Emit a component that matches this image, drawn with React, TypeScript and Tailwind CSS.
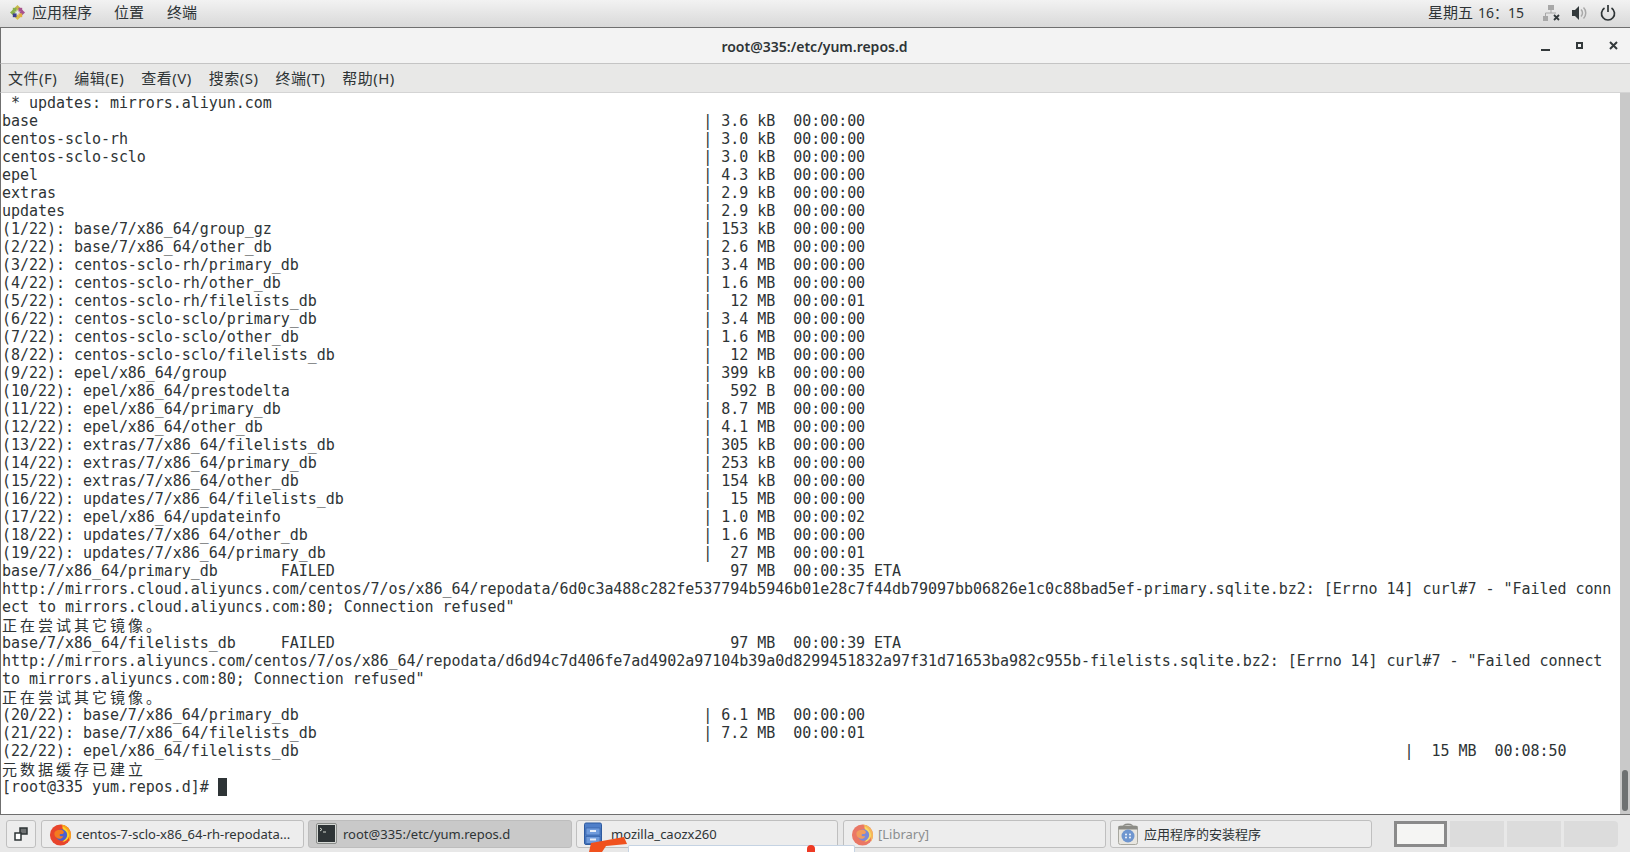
const mono = "font-['DejaVu_Sans_Mono','Liberation_Mono',monospace]"

function row(name: string, size: string, time: string) {
  return `${name.padEnd(78)}| ${size.padStart(6)}  ${time}`
}

const lines: { text: string; cjk?: boolean }[] = [
  { text: ' * updates: mirrors.aliyun.com' },
  { text: row('base', '3.6 kB', '00:00:00') },
  { text: row('centos-sclo-rh', '3.0 kB', '00:00:00') },
  { text: row('centos-sclo-sclo', '3.0 kB', '00:00:00') },
  { text: row('epel', '4.3 kB', '00:00:00') },
  { text: row('extras', '2.9 kB', '00:00:00') },
  { text: row('updates', '2.9 kB', '00:00:00') },
  { text: row('(1/22): base/7/x86_64/group_gz', '153 kB', '00:00:00') },
  { text: row('(2/22): base/7/x86_64/other_db', '2.6 MB', '00:00:00') },
  { text: row('(3/22): centos-sclo-rh/primary_db', '3.4 MB', '00:00:00') },
  { text: row('(4/22): centos-sclo-rh/other_db', '1.6 MB', '00:00:00') },
  { text: row('(5/22): centos-sclo-rh/filelists_db', '12 MB', '00:00:01') },
  { text: row('(6/22): centos-sclo-sclo/primary_db', '3.4 MB', '00:00:00') },
  { text: row('(7/22): centos-sclo-sclo/other_db', '1.6 MB', '00:00:00') },
  { text: row('(8/22): centos-sclo-sclo/filelists_db', '12 MB', '00:00:00') },
  { text: row('(9/22): epel/x86_64/group', '399 kB', '00:00:00') },
  { text: row('(10/22): epel/x86_64/prestodelta', '592 B', '00:00:00') },
  { text: row('(11/22): epel/x86_64/primary_db', '8.7 MB', '00:00:00') },
  { text: row('(12/22): epel/x86_64/other_db', '4.1 MB', '00:00:00') },
  { text: row('(13/22): extras/7/x86_64/filelists_db', '305 kB', '00:00:00') },
  { text: row('(14/22): extras/7/x86_64/primary_db', '253 kB', '00:00:00') },
  { text: row('(15/22): extras/7/x86_64/other_db', '154 kB', '00:00:00') },
  { text: row('(16/22): updates/7/x86_64/filelists_db', '15 MB', '00:00:00') },
  { text: row('(17/22): epel/x86_64/updateinfo', '1.0 MB', '00:00:02') },
  { text: row('(18/22): updates/7/x86_64/other_db', '1.6 MB', '00:00:00') },
  { text: row('(19/22): updates/7/x86_64/primary_db', '27 MB', '00:00:01') },
  { text: 'base/7/x86_64/primary_db       FAILED'.padEnd(81) + '97 MB  00:00:35 ETA' },
  { text: 'http://mirrors.cloud.aliyuncs.com/centos/7/os/x86_64/repodata/6d0c3a488c282fe537794b5946b01e28c7f44db79097bb06826e1c0c88bad5ef-primary.sqlite.bz2: [Errno 14] curl#7 - "Failed conn' },
  { text: 'ect to mirrors.cloud.aliyuncs.com:80; Connection refused"' },
  { text: '正在尝试其它镜像。', cjk: true },
  { text: 'base/7/x86_64/filelists_db     FAILED'.padEnd(81) + '97 MB  00:00:39 ETA' },
  { text: 'http://mirrors.aliyuncs.com/centos/7/os/x86_64/repodata/d6d94c7d406fe7ad4902a97104b39a0d8299451832a97f31d71653ba982c955b-filelists.sqlite.bz2: [Errno 14] curl#7 - "Failed connect' },
  { text: 'to mirrors.aliyuncs.com:80; Connection refused"' },
  { text: '正在尝试其它镜像。', cjk: true },
  { text: row('(20/22): base/7/x86_64/primary_db', '6.1 MB', '00:00:00') },
  { text: row('(21/22): base/7/x86_64/filelists_db', '7.2 MB', '00:00:01') },
  { text: '(22/22): epel/x86_64/filelists_db'.padEnd(156) + '|  15 MB  00:08:50' },
  { text: '元数据缓存已建立', cjk: true },
]

function CentosLogo() {
  return (
    <svg width="15" height="15" viewBox="0 0 16 16">
      <path d="M8 0 11 3 8 6 5 3Z" fill="#c9b84a" />
      <path d="M8 16 5 13 8 10 11 13Z" fill="#d9c24a" />
      <path d="M0 8 3 5 6 8 3 11Z" fill="#8ab04a" />
      <path d="M16 8 13 11 10 8 13 5Z" fill="#a8528f" />
      <rect x="3" y="3" width="4" height="4" fill="#8ab04a" />
      <rect x="9" y="3" width="4" height="4" fill="#a8528f" />
      <rect x="3" y="9" width="4" height="4" fill="#3f3f8f" />
      <rect x="9" y="9" width="4" height="4" fill="#e0b040" />
    </svg>
  )
}

function FirefoxIcon({ faded }: { faded?: boolean }) {
  return (
    <svg width="23" height="24" viewBox="0 0 24 24" className={faded ? 'opacity-70' : ''}>
      <circle cx="12" cy="13" r="11" fill="#e8452c" />
      <path d="M12 2c6 0 11 5 11 11 0 3-1 5-2 7 0-6-2-11-7-14 1-2 0-3-2-4Z" fill="#f9a11b" />
      <path d="M14 4c4 2 7 6 7 10-1 4-4 6-7 6 3-2 4-5 3-8-1-3-3-5-3-8Z" fill="#fcd12a" />
      <circle cx="13" cy="13" r="6" fill="#4a5fd0" />
      <path d="M6 10c2-2 5-3 8-2 2 1 2 3 0 4-1 0-3 0-3 1s2 2 4 1c-1 3-5 4-7 2-2-1-3-4-2-6Z" fill="#f47b20" />
    </svg>
  )
}

function TerminalIcon() {
  return (
    <svg width="21" height="21" viewBox="0 0 21 21">
      <rect x="0.5" y="0.5" width="20" height="20" rx="1.5" fill="#d5d8d5" stroke="#8a8d8a" />
      <rect x="2" y="2" width="17" height="17" fill="#2e3436" />
      <path d="M4 5 6 6.5 4 8M7 9H10" stroke="#d3d7cf" strokeWidth="1" fill="none" />
    </svg>
  )
}

function CabinetIcon() {
  return (
    <svg width="18" height="23" viewBox="0 0 18 23">
      <rect x="0.5" y="1" width="17" height="21.5" rx="1.5" fill="#4f7fc9" stroke="#2d5aa0" />
      <rect x="2" y="6" width="14" height="7" fill="#6f9bdc" stroke="#2d5aa0" strokeWidth="0.6" />
      <rect x="2" y="14.5" width="14" height="7" fill="#6f9bdc" stroke="#2d5aa0" strokeWidth="0.6" />
      <rect x="6" y="8" width="6" height="2" fill="#e8eef8" />
      <rect x="6" y="16.5" width="6" height="2" fill="#e8eef8" />
    </svg>
  )
}

function InstallerIcon() {
  return (
    <svg width="20" height="23" viewBox="0 0 20 23">
      <path d="M5 6C5 1 15 1 15 6" stroke="#8a8a85" strokeWidth="1.5" fill="none" />
      <rect x="0.5" y="4" width="19" height="18.5" rx="2" fill="#e8e6e0" stroke="#a8a8a0" />
      <rect x="0.5" y="4" width="19" height="3.5" fill="#8c8c86" />
      <circle cx="10" cy="14" r="6.5" fill="#6f96cf" />
      <circle cx="8" cy="12.5" r="0.9" fill="#fff" />
      <circle cx="12" cy="12.5" r="0.9" fill="#fff" />
      <circle cx="8" cy="15.5" r="0.9" fill="#fff" />
      <circle cx="12" cy="15.5" r="0.9" fill="#fff" />
    </svg>
  )
}

function TaskItem({ icon, label, active, dim, className, gap }: { icon: React.ReactNode; label: string; active?: boolean; dim?: boolean; className: string; gap: string }) {
  return (
    <div
      className={`flex h-[28px] shrink-0 items-center overflow-hidden rounded-[3px] border px-[7px] text-[13px] whitespace-nowrap ${gap} ${className} ${
        active ? 'border-[#bdbdbd] bg-[#c9c9c9] text-[#2e3436]' : 'border-[#bfbfbf] bg-[#ededed]'
      } ${dim ? 'text-[#8b8e8f]' : 'text-[#2e3436]'}`}
    >
      {icon}
      <span className="pt-[3px]">{label}</span>
    </div>
  )
}

export default function App() {
  const ui = "font-['Noto_Sans','Noto_Sans_CJK_SC',sans-serif]"
  return (
    <div className={`relative flex h-[852px] w-[1630px] flex-col overflow-hidden bg-white text-[#2e3436] ${ui}`}>
      {/* gnome top bar */}
      <div className="flex h-[28px] shrink-0 items-center border-b border-[#6f6f6f] bg-gradient-to-b from-[#f2f2f2] to-[#d9d9d9] pb-[2px] pl-[10px] pr-[14px] text-[15px]">
        <CentosLogo />
        <span className="ml-[7px]">应用程序</span>
        <span className="ml-[22px]">位置</span>
        <span className="ml-[23px]">终端</span>
        <span className="ml-auto text-[15px]">星期五</span>
        <span className="ml-[5px] text-[14px]">16：15</span>
        <svg className="ml-[19px]" width="17" height="16" viewBox="0 0 17 16">
          <path d="M5 0h6v5H5ZM0 11h5v5H0Z" fill="#a8a8a8" />
          <path d="M8 5v3H2.500v3M8 8h5" stroke="#a8a8a8" fill="none" />
          <path d="M11 10l5 5m0-5-5 5" stroke="#33393b" strokeWidth="1.800" />
        </svg>
        <svg className="ml-[12px]" width="16" height="16" viewBox="0 0 16 16">
          <path d="M0 5h3l4-4v14l-4-4H0Z" fill="#33393b" />
          <path d="M9 4.500c2 2 2 5 0 7M11.500 2.500c3 3 3 8 0 11" stroke="#a8a8a8" strokeWidth="1.500" fill="none" />
        </svg>
        <svg className="ml-[12px]" width="16" height="16" viewBox="0 0 16 16">
          <path d="M4.500 3a6.500 6.500 0 1 0 7 0M8 0v7" stroke="#2e3436" strokeWidth="1.700" fill="none" />
        </svg>
      </div>

      {/* window title */}
      <div className="flex h-[36px] shrink-0 items-center border-l border-[#6f6f6f] border-b border-b-[#c4c4c4] bg-[#f3f3f3] pr-[12px]">
        <div className="flex-1 pl-[87px] pt-px text-center text-[14px] font-semibold">root@335:/etc/yum.repos.d</div>
        <svg className="mt-[7px]" width="9" height="3" viewBox="0 0 9 3">
          <rect width="9" height="2" y="1" fill="#33393b" />
        </svg>
        <svg className="ml-[26px]" width="7" height="7" viewBox="0 0 7 7">
          <path d="M1 1h5v5H1Z" fill="none" stroke="#33393b" strokeWidth="2" />
        </svg>
        <svg className="ml-[26px]" width="9" height="9" viewBox="0 0 9 9">
          <path d="M1 1l7 7m0-7-7 7" stroke="#33393b" strokeWidth="2" />
        </svg>
      </div>

      {/* menu */}
      <div className="flex h-[29px] shrink-0 items-center gap-[17px] border-l border-[#6f6f6f] border-b border-b-[#d4d4d4] bg-[#e8e8e7] pl-[7px] text-[15px] tracking-[0.5px]">
        <span>文件(F)</span>
        <span>编辑(E)</span>
        <span>查看(V)</span>
        <span>搜索(S)</span>
        <span>终端(T)</span>
        <span>帮助(H)</span>
      </div>

      {/* terminal */}
      <div className="flex min-h-0 flex-1 border-l border-[#6f6f6f]">
        <div className={`min-w-0 flex-1 overflow-hidden pl-px pt-px text-[15px] leading-[18px] tracking-[-0.04px] whitespace-pre text-[#2e3436] ${mono}`}>
          {lines.map((l, i) =>
            l.cjk ? (
              <div key={i} className="h-[18px] font-['Noto_Sans_CJK_SC',sans-serif] tracking-[3px]">{l.text}</div>
            ) : (
              <div key={i} className="h-[18px]">{l.text}</div>
            ),
          )}
          <div className="flex h-[18px] items-center">
            <span>[root@335 yum.repos.d]# </span>
            <span className="h-[18px] w-[9px] bg-[#2e3436]" />
          </div>
        </div>
        <div className="flex w-[10px] shrink-0 flex-col justify-end bg-[#c9c9c9] px-[2px] pb-[3px]">
          <div className="h-[41px] rounded-full bg-[#6e7172]" />
        </div>
      </div>

      {/* window list */}
      <div className="relative flex h-[38px] shrink-0 items-center border-t border-[#6f6f6f] bg-[#e8e8e8] pl-[6px]">
        <div className="mr-[5px] flex h-[28px] w-[30px] shrink-0 items-center justify-center rounded-[3px] border border-[#bfbfbf] bg-[#ededed]">
          <svg width="14" height="14" viewBox="0 0 14 14">
            <path d="M6 1h7v6H6Z" fill="#6f7273" stroke="#2e3436" strokeWidth="1.500" />
            <path d="M1 6h6v7H1Z" fill="#fff" stroke="#2e3436" strokeWidth="1.500" />
          </svg>
        </div>
        <TaskItem className="w-[263px]" gap="gap-[4px]" icon={<FirefoxIcon />} label="centos-7-sclo-x86_64-rh-repodata..." />
        <TaskItem className="ml-[4px] w-[264px]" gap="gap-[6px]" active icon={<TerminalIcon />} label="root@335:/etc/yum.repos.d" />
        <TaskItem className="ml-[4px] w-[262px]" gap="gap-[9px]" icon={<CabinetIcon />} label="mozilla_caozx260" />
        <TaskItem className="ml-[5px] w-[263px]" gap="gap-[4px]" dim icon={<FirefoxIcon faded />} label="[Library]" />
        <TaskItem className="ml-[4px] w-[262px]" gap="gap-[6px]" icon={<InstallerIcon />} label="应用程序的安装程序" />
        <div className="ml-[22px] flex gap-[3px]">
          <div className="h-[26px] w-[53px] border-[3px] border-[#8a8a8a] bg-[#f5f5f3]" />
          <div className="h-[26px] w-[54px] bg-[#dcdcdc]" />
          <div className="h-[26px] w-[54px] bg-[#dcdcdc]" />
          <div className="h-[26px] w-[54px] rounded-r-[4px] bg-[#dcdcdc]" />
        </div>
      </div>

      {/* annotation poking in from below */}
      <div className="absolute bottom-0 left-[628px] h-[7px] w-[227px] rounded-t-[2px] border border-b-0 border-[#c5d3e3] bg-white" />
      <svg className="absolute bottom-0 left-[586px]" width="44" height="15" viewBox="0 0 44 15">
        <path d="M3 15 5 6 38 0 41 7 20 9 16 15Z" fill="#f0511e" />
      </svg>
      <div className="absolute bottom-0 left-[807px] h-[7px] w-[8px] rounded-t-full bg-[#ee3a24]" />
    </div>
  )
}
